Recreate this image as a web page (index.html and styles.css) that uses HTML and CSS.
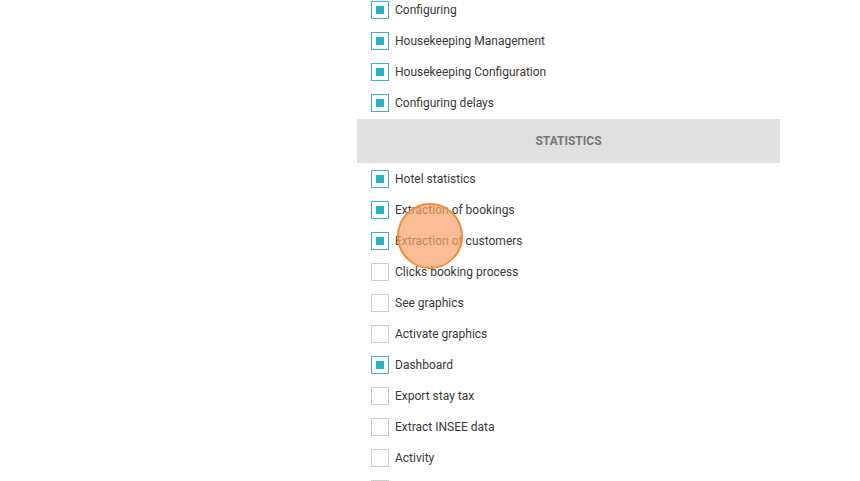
FILE: index.html
```html
<!DOCTYPE html>
<html lang="en">
<head>
<meta charset="UTF-8" />
<title>Rights</title>
<link rel="stylesheet" href="styles.css">
</head>
<body>
  <div class="rights">
    <ul class="perm-list">
      <li class="perm"><span class="box on"></span>Configuring</li>
      <li class="perm"><span class="box on"></span>Housekeeping Management</li>
      <li class="perm"><span class="box on"></span>Housekeeping Configuration</li>
      <li class="perm"><span class="box on"></span>Configuring delays</li>
      <li class="section">STATISTICS</li>
      <li class="perm"><span class="box on"></span>Hotel statistics</li>
      <li class="perm"><span class="box on"></span>Extraction of bookings</li>
      <li class="perm"><span class="box on"></span>Extraction of customers</li>
      <li class="perm"><span class="box"></span>Clicks booking process</li>
      <li class="perm"><span class="box"></span>See graphics</li>
      <li class="perm"><span class="box"></span>Activate graphics</li>
      <li class="perm"><span class="box on"></span>Dashboard</li>
      <li class="perm"><span class="box"></span>Export stay tax</li>
      <li class="perm"><span class="box"></span>Extract INSEE data</li>
      <li class="perm"><span class="box"></span>Activity</li>
      <li class="perm"><span class="box"></span>Activity history</li>
    </ul>
    <!-- click marker -->
    <div class="click-dot"></div>
  </div>
</body>
</html>
```

FILE: styles.css
```css
html, body {
  margin: 0;
  background: #fff;
  overflow: hidden;
  height: 481px;
}

.rights {
  position: relative;
  width: 423px;
  margin-left: 357px;
  font-family: Roboto, "Liberation Sans", sans-serif;
}

.perm-list {
  list-style: none;
  margin: -6px 0 0;
  padding: 0;
}

.perm {
  display: flex;
  align-items: center;
  height: 31px;
  padding-left: 14px;
  font-size: 12px;
  color: #3a3a3a;
}

.box {
  box-sizing: border-box;
  width: 18px;
  height: 18px;
  margin-right: 6px;
  border: 1px solid #ccc;
  background: #fff;
  display: flex;
  justify-content: center;
  align-items: center;
  flex-shrink: 0;
}

.box.on {
  border-color: #3ab3c3;
}

.box.on::after {
  content: "";
  width: 8px;
  height: 8px;
  background: #26b3c6;
}

.section {
  height: 44px;
  line-height: 44px;
  margin: 1px 0 0;
  background: #e0e0e0;
  text-align: center;
  font-size: 12px;
  font-weight: bold;
  color: #777;
}

.click-dot {
  position: absolute;
  left: 40px;
  top: 209px;
  box-sizing: border-box;
  width: 66px;
  height: 66px;
  border-radius: 50%;
  border: 2px solid #f18d36;
  background: rgba(248, 164, 108, 0.72);
}
```
